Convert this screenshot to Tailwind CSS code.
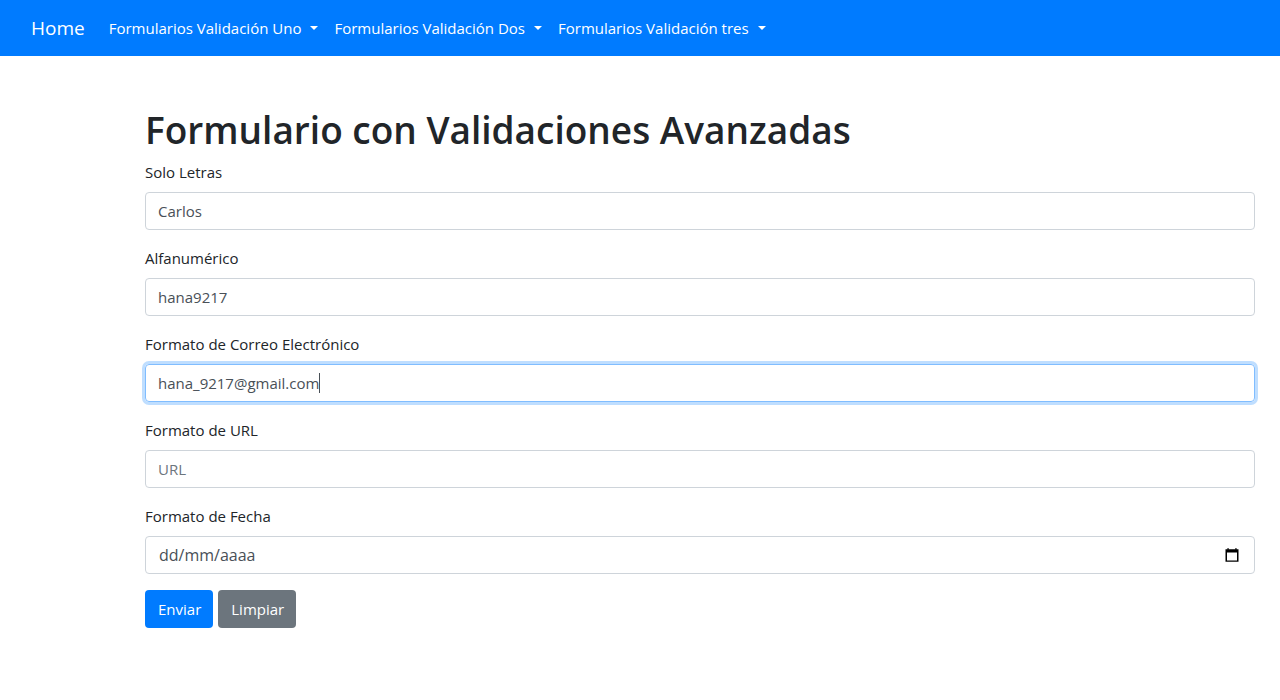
<!DOCTYPE html>
<html lang="es">
<head>
<meta charset="utf-8">
<meta name="viewport" content="width=device-width, initial-scale=1">
<title>Formulario con Validaciones Avanzadas</title>
<script src="https://cdn.jsdelivr.net/npm/@tailwindcss/browser@4"></script>
</head>
<body class="bg-white font-['Segoe_UI','Open_Sans','Noto_Sans',sans-serif] text-[15px] leading-6 text-[#212529]">
<nav class="flex h-14 items-center bg-[#007bff] pl-[31px] text-white">
  <a href="#" class="mr-4 text-[19px]">Home</a>
  <button type="button" class="flex items-center gap-[9px] px-2 whitespace-nowrap">Formularios Validación Uno <span class="border-x-4 border-t-4 border-x-transparent border-t-white"></span></button>
  <button type="button" class="flex items-center gap-[9px] px-2 whitespace-nowrap">Formularios Validación Dos <span class="border-x-4 border-t-4 border-x-transparent border-t-white"></span></button>
  <button type="button" class="flex items-center gap-[9px] px-2 whitespace-nowrap">Formularios Validación tres <span class="border-x-4 border-t-4 border-x-transparent border-t-white"></span></button>
</nav>
<main class="pt-[50px] pr-[25px] pl-[145px]">
  <h1 class="mb-1.5 text-[37px] leading-12 font-semibold">Formulario con Validaciones Avanzadas</h1>
  <form class="flex flex-col gap-4">
    <div class="flex flex-col gap-2">
      <label for="letras">Solo Letras</label>
      <input id="letras" type="text" value="Carlos" class="h-[38px] w-full rounded border border-[#ced4da] px-3 text-[#495057] outline-none">
    </div>
    <div class="flex flex-col gap-2">
      <label for="alfa">Alfanumérico</label>
      <input id="alfa" type="text" value="hana9217" class="h-[38px] w-full rounded border border-[#ced4da] px-3 text-[#495057] outline-none">
    </div>
    <div class="flex flex-col gap-2">
      <label for="correo">Formato de Correo Electrónico</label>
      <div class="relative">
        <input id="correo" type="email" value="hana_9217@gmail.com" class="block h-[38px] w-full rounded border border-[#80bdff] px-3 text-[#495057] caret-transparent ring-3 ring-[#007bff]/25 outline-none">
        <span class="pointer-events-none absolute top-[9px] left-[13px] flex h-5" aria-hidden="true"><span class="invisible">hana_9217@gmail.com</span><span class="w-px bg-[#495057]"></span></span>
      </div>
    </div>
    <div class="flex flex-col gap-2">
      <label for="url">Formato de URL</label>
      <input id="url" type="url" placeholder="URL" class="h-[38px] w-full rounded border border-[#ced4da] px-3 text-[#495057] outline-none placeholder:text-[#6c757d]">
    </div>
    <div class="flex flex-col gap-2">
      <label for="fecha">Formato de Fecha</label>
      <div class="flex h-[38px] items-center rounded border border-[#ced4da] pr-[14px] pl-[13px]">
        <input id="fecha" type="text" placeholder="dd/mm/aaaa" class="min-w-0 flex-1 text-base outline-none placeholder:text-[#495057]">
        <button type="button" aria-label="Abrir calendario"><svg class="block" width="16" height="16" viewBox="0 0 16 16" fill="black"><path d="M3.500 1H4.600V2.200H11.400V1H12.500V2.200H14.500V14.700H1.500V2.200H3.500zM3 5.500V13.500H13V5.500z" fill-rule="evenodd"/></svg></button>
      </div>
    </div>
    <div class="flex gap-[5px] text-white">
      <button type="submit" class="h-[38px] rounded bg-[#007bff] pr-3 pl-[13px]">Enviar</button>
      <button type="reset" class="h-[38px] rounded bg-[#6c757d] pr-3 pl-[13px]">Limpiar</button>
    </div>
  </form>
</main>
</body>
</html>
